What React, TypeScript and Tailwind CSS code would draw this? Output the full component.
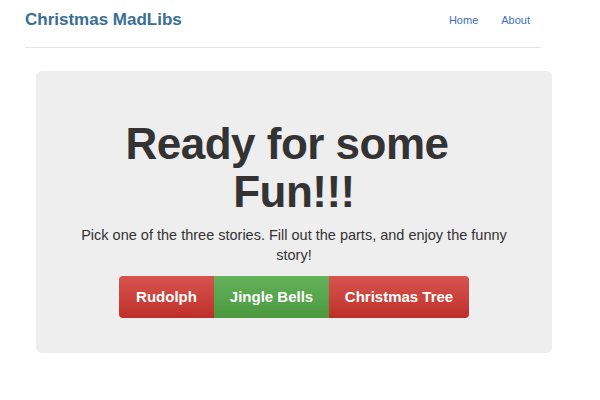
export default function App() {
  const font = { fontFamily: '"Liberation Sans", Arial, Helvetica, sans-serif' };
  return (
    <div className="w-[600px] h-[400px] bg-white overflow-hidden" style={font}>
      <div className="mx-[25px] w-[516px] h-[48px] border-b border-[#e5e5e5] flex items-start justify-between">
        <div className="mt-[9px] text-[17px] leading-[22px] font-bold text-[#3a6e95]">Christmas MadLibs</div>
        <div className="flex gap-[23px] mt-[13px] mr-[11px] text-[11px] leading-[14px] text-[#3b6fbf]">
          <span>Home</span>
          <span>About</span>
        </div>
      </div>
      <div className="mx-[36px] mt-[23px] w-[516px] h-[282px] bg-[#eeeeee] rounded-[6px] flex flex-col items-center pt-[49px]">
        <h1 className="text-[44px] leading-[48px] font-bold text-[#333333] text-center tracking-[-0.5px] whitespace-nowrap">
          <span className="pr-[14px]">Ready for some</span>
          <br />
          Fun!!!
        </h1>
        <p className="mt-[9px] text-[14.5px] leading-[20px] text-[#333333] text-center whitespace-nowrap">
          Pick one of the three stories. Fill out the parts, and enjoy the funny
          <br />
          story!
        </p>
        <div className="mt-[11px] flex h-[42px] rounded-[4px] overflow-hidden text-white text-[15px] font-bold">
          <div className="w-[95px] flex items-center justify-center bg-gradient-to-b from-[#d7544f] to-[#bf2e28]">Rudolph</div>
          <div className="w-[115px] flex items-center justify-center bg-gradient-to-b from-[#63b35c] to-[#4b983d]">Jingle Bells</div>
          <div className="w-[140px] flex items-center justify-center bg-gradient-to-b from-[#d7544f] to-[#bf2e28]">Christmas Tree</div>
        </div>
      </div>
    </div>
  );
}
